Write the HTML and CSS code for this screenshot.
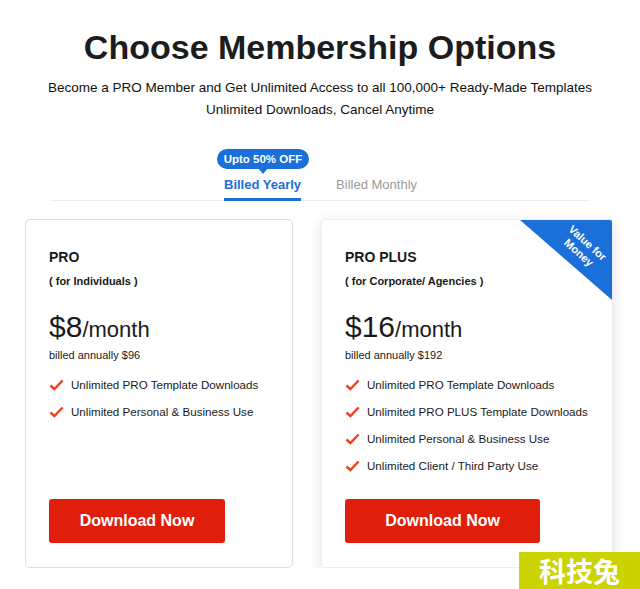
FILE: index.html
```html
<!DOCTYPE html>
<html lang="en">
<head>
    <meta charset="UTF-8">
    <meta name="viewport" content="width=device-width, initial-scale=1.0">
    <title>Choose Membership Options</title>
    <link rel="stylesheet" href="styles.css">
</head>
<body>
    <header class="intro">
        <h1>Choose Membership Options</h1>
        <p>Become a PRO Member and Get Unlimited Access to all 100,000+ Ready-Made Templates<br>Unlimited Downloads, Cancel Anytime</p>
    </header>

    <nav class="tabs">
        <a class="tab active" href="#">
            <span class="badge">Upto 50% OFF</span>
            Billed Yearly
        </a>
        <a class="tab" href="#">Billed Monthly</a>
    </nav>

    <section class="plans">
        <div class="plan">
            <h2>PRO</h2>
            <p class="for">( for Individuals )</p>
            <p class="price"><span class="amount">$8</span>/month</p>
            <p class="billed">billed annually $96</p>
            <ul class="features">
                <li><svg viewBox="0 0 16 12"><path d="M1.5 6.5 L5.8 10.3 L14.5 1.2"/></svg>Unlimited PRO Template Downloads</li>
                <li><svg viewBox="0 0 16 12"><path d="M1.5 6.5 L5.8 10.3 L14.5 1.2"/></svg>Unlimited Personal &amp; Business Use</li>
            </ul>
            <button>Download Now</button>
        </div>

        <div class="plan featured">
            <div class="ribbon"><span>Value for<br>Money</span></div>
            <h2>PRO PLUS</h2>
            <p class="for">( for Corporate/ Agencies )</p>
            <p class="price"><span class="amount">$16</span>/month</p>
            <p class="billed">billed annually $192</p>
            <ul class="features">
                <li><svg viewBox="0 0 16 12"><path d="M1.5 6.5 L5.8 10.3 L14.5 1.2"/></svg>Unlimited PRO Template Downloads</li>
                <li><svg viewBox="0 0 16 12"><path d="M1.5 6.5 L5.8 10.3 L14.5 1.2"/></svg>Unlimited PRO PLUS Template Downloads</li>
                <li><svg viewBox="0 0 16 12"><path d="M1.5 6.5 L5.8 10.3 L14.5 1.2"/></svg>Unlimited Personal &amp; Business Use</li>
                <li><svg viewBox="0 0 16 12"><path d="M1.5 6.5 L5.8 10.3 L14.5 1.2"/></svg>Unlimited Client / Third Party Use</li>
            </ul>
            <button>Download Now</button>
        </div>
    </section>

    <div class="watermark">科技兔</div>
</body>
</html>
```

FILE: styles.css
```css
body {
    font-family: "Liberation Sans", Arial, sans-serif;
    background-color: #fff;
    color: #1a1a1a;
    margin: 0;
    padding: 0;
}

.intro {
    text-align: center;
    padding-top: 27px;
}

.intro h1 {
    font-size: 34px;
    line-height: 40px;
    margin: 0 0 10px;
    color: #1c1c1c;
}

.intro p {
    font-size: 13.5px;
    line-height: 22px;
    margin: 0;
    color: #111;
}

.tabs {
    width: 540px;
    margin: 56px auto 0;
    padding-left: 174px;
    box-sizing: border-box;
    display: flex;
    gap: 35px;
    border-bottom: 1px solid #eee;
}

.tab {
    position: relative;
    font-size: 13px;
    line-height: 16px;
    padding-bottom: 5px;
    color: #999;
    text-decoration: none;
}

.tab.active {
    font-weight: bold;
    color: #1b6fd8;
    border-bottom: 3px solid #1b6fd8;
    margin-bottom: -1px;
}

.badge {
    position: absolute;
    left: -7px;
    top: -28px;
    width: 92px;
    height: 20px;
    line-height: 20px;
    border-radius: 10px;
    background-color: #1b6fd8;
    color: #fff;
    font-size: 11.5px;
    text-align: center;
    white-space: nowrap;
}

.badge::after {
    content: "";
    position: absolute;
    left: 41px;
    bottom: -5px;
    border-left: 5px solid transparent;
    border-right: 5px solid transparent;
    border-top: 6px solid #1b6fd8;
}

.plans {
    display: flex;
    gap: 28px;
    padding-left: 25px;
    margin-top: 18px;
}

.plan {
    position: relative;
    overflow: hidden;
    width: 268px;
    height: 349px;
    box-sizing: border-box;
    padding: 28px 23px 24px;
    border: 1px solid #ddd;
    border-radius: 5px;
    display: flex;
    flex-direction: column;
}

.plan.featured {
    width: 292px;
    border-color: #eee;
    border-radius: 3px;
    box-shadow: 0 4px 14px rgba(0, 0, 0, 0.12);
}

.plan h2 {
    font-size: 14px;
    line-height: 18px;
    margin: 0;
}

.plan .for {
    font-size: 11px;
    font-weight: bold;
    line-height: 14px;
    margin: 8px 0 0;
}

.price {
    font-size: 22px;
    line-height: 32px;
    margin: 23px 0 0;
}

.price .amount {
    font-size: 30px;
}

.billed {
    font-size: 11px;
    line-height: 14px;
    margin: 2px 0 0;
}

.features {
    list-style: none;
    padding: 0;
    margin: 15px 0 0;
}

.features li {
    display: flex;
    align-items: center;
    font-size: 11.6px;
    line-height: 15px;
    white-space: nowrap;
    margin-bottom: 12px;
}

.features svg {
    width: 15px;
    height: 12px;
    margin-right: 7px;
    fill: none;
    stroke: #f0401e;
    stroke-width: 2.6;
}

.plan button {
    margin-top: auto;
    width: 80%;
    height: 44px;
    background-color: #e01e0c;
    color: #fff;
    border: none;
    border-radius: 3px;
    font-family: inherit;
    font-size: 16px;
    font-weight: bold;
    cursor: pointer;
}

.ribbon {
    position: absolute;
    top: 0;
    right: 0;
    width: 92px;
    height: 80px;
    background-color: #1b6fd8;
    clip-path: polygon(0 0, 100% 0, 100% 100%);
}

.ribbon span {
    position: absolute;
    top: 15px;
    right: -4px;
    width: 66px;
    transform: rotate(42deg);
    color: #fff;
    font-size: 11px;
    font-weight: bold;
    line-height: 13px;
    text-align: center;
}

.watermark {
    position: absolute;
    right: 0;
    top: 552px;
    width: 121px;
    height: 37px;
    background-color: #cbd400;
    color: #fff;
    font-family: "Noto Sans CJK SC", sans-serif;
    font-size: 27px;
    font-weight: bold;
    line-height: 37px;
    text-align: center;
}
```
